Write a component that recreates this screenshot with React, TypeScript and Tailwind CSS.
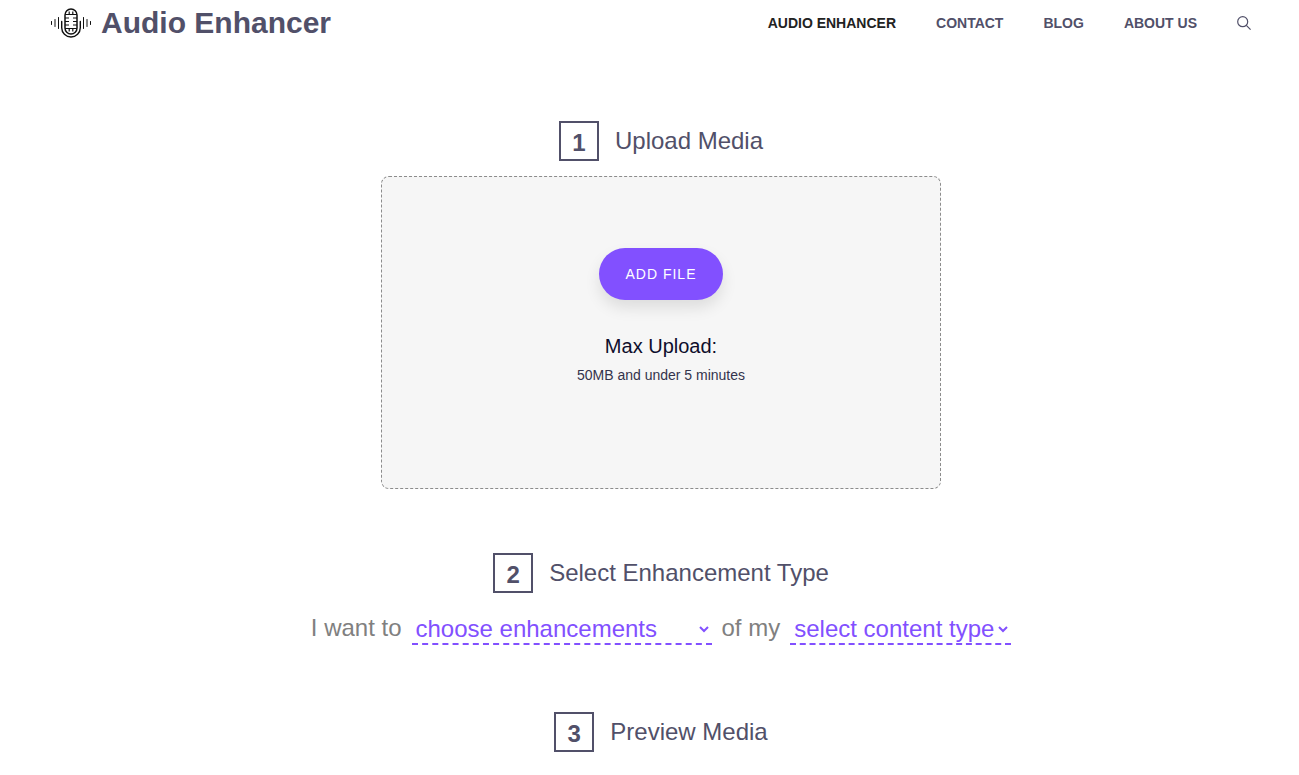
import React from 'react';

const NAV_ITEMS = [
    { label: 'Audio Enhancer', href: '#enhancer', active: true },
    { label: 'Contact', href: '#contact', active: false },
    { label: 'Blog', href: '#blog', active: false },
    { label: 'About Us', href: '#about', active: false },
];

const Logo: React.FC = () => (
    <svg width="42" height="32" viewBox="0 0 42 32" fill="none" stroke="#111111" aria-hidden="true">
        {/* Sound waves */}
        <path
            d="M1.500 14.500v3M5 12.500v7M8.500 10.500v11M33.500 10.500v11M37 12.500v7M40.500 14.500v3"
            strokeWidth="1"
            strokeLinecap="round"
        />
        {/* Microphone */}
        <rect x="15" y="2" width="12" height="25" rx="6" strokeWidth="1.500" />
        <path d="M15 7.500h12M15 21.500h12M19.200 4.500v3M22.800 4.500v3M19.200 21.500v3M22.800 21.500v3" strokeWidth="1.200" />
        <path d="M15 11h4M15 14.500h4M15 18h4M27 11h-4M27 14.500h-4M27 18h-4" strokeWidth="1.200" />
        <path d="M11.700 14.500v6.200a9.300 9.300 0 0 0 18.600 0v-6.200" strokeWidth="1.400" strokeLinecap="round" />
    </svg>
);

const Header: React.FC = () => (
    <header className="flex h-[46px] items-center justify-between pl-[50px] pr-12">
        <a href="#home" className="flex items-center gap-[9px] text-3xl font-bold text-[#515069]">
            <Logo />
            Audio Enhancer
        </a>
        <nav className="flex items-center gap-10 text-sm font-bold uppercase text-[#515069]">
            {NAV_ITEMS.map(item => (
                <a key={item.label} href={item.href} className={item.active ? 'text-[#222222]' : undefined}>
                    {item.label}
                </a>
            ))}
            <button type="button" aria-label="Search">
                <svg width="14" height="14" viewBox="0 0 14 14" fill="none" stroke="currentColor" strokeWidth="1.2">
                    <circle cx="5.700" cy="5.700" r="5" />
                    <path d="M9.300 9.300l4.300 4.300" />
                </svg>
            </button>
        </nav>
    </header>
);

interface StepHeadingProps {
    step: number;
    title: string;
}

const StepHeading: React.FC<StepHeadingProps> = ({ step, title }) => (
    <h2 className="flex items-center justify-center gap-4 text-2xl text-[#515069]">
        <span className="flex h-10 w-10 items-center justify-center border-2 border-[#515069] pt-1 font-bold">
            {step}
        </span>
        {title}
    </h2>
);

interface InlineSelectProps {
    label: string;
    placeholder: string;
    options: string[];
    widthClass: string;
}

const InlineSelect: React.FC<InlineSelectProps> = ({ label, placeholder, options, widthClass }) => (
    <span className={`relative ${widthClass}`}>
        <select
            aria-label={label}
            defaultValue=""
            className="block h-[34px] w-full appearance-none border-b-2 border-dashed border-[#8250ff] bg-transparent pl-1 pt-[2px] text-[#8250ff]"
        >
            <option value="">{placeholder}</option>
            {options.map(option => (
                <option key={option} value={option}>{option}</option>
            ))}
        </select>
        <svg
            className="pointer-events-none absolute right-[3px] top-[15px]"
            width="10"
            height="7"
            viewBox="0 0 10 7"
            fill="none"
            stroke="#8250ff"
            strokeWidth="2"
        >
            <path d="M1 1l4 4 4-4" />
        </svg>
    </span>
);

const App: React.FC = () => {
    return (
        <div className="bg-white font-['Liberation_Sans',Arial,sans-serif]">
            <Header />
            <main className="pl-[23px] pt-[75px]">
                <section>
                    <StepHeading step={1} title="Upload Media" />
                    <div className="mx-auto mt-[15px] flex max-w-[560px] flex-col items-center rounded-lg border border-dashed border-[#8c8c8c] bg-[#f6f6f6] pb-[103px] pt-[71px]">
                        <button
                            type="button"
                            className="h-[52px] rounded-full bg-[#8250ff] px-[26px] text-sm uppercase tracking-[1px] text-white shadow-[0_8px_15px_rgba(0,0,0,0.1)]"
                        >
                            Add File
                        </button>
                        <p className="mt-8 text-xl text-[#0e0e2c]">Max Upload:</p>
                        <p className="mt-[5px] text-sm text-[#33334c]">50MB and under 5 minutes</p>
                    </div>
                </section>

                <section className="mt-16">
                    <StepHeading step={2} title="Select Enhancement Type" />
                    <div className="mt-[18px] flex items-center justify-center gap-[10px] whitespace-nowrap text-2xl text-[#808080]">
                        <span>I want to</span>
                        <InlineSelect
                            label="Enhancement"
                            placeholder="choose enhancements"
                            options={['remove noise', 'improve speech', 'balance volume']}
                            widthClass="w-[300px]"
                        />
                        <span>of my</span>
                        <InlineSelect
                            label="Content type"
                            placeholder="select content type"
                            options={['podcast', 'interview', 'music']}
                            widthClass="w-[221px]"
                        />
                    </div>
                </section>

                <section className="mt-[67px]">
                    <StepHeading step={3} title="Preview Media" />
                </section>
            </main>
        </div>
    );
};

export default App;
